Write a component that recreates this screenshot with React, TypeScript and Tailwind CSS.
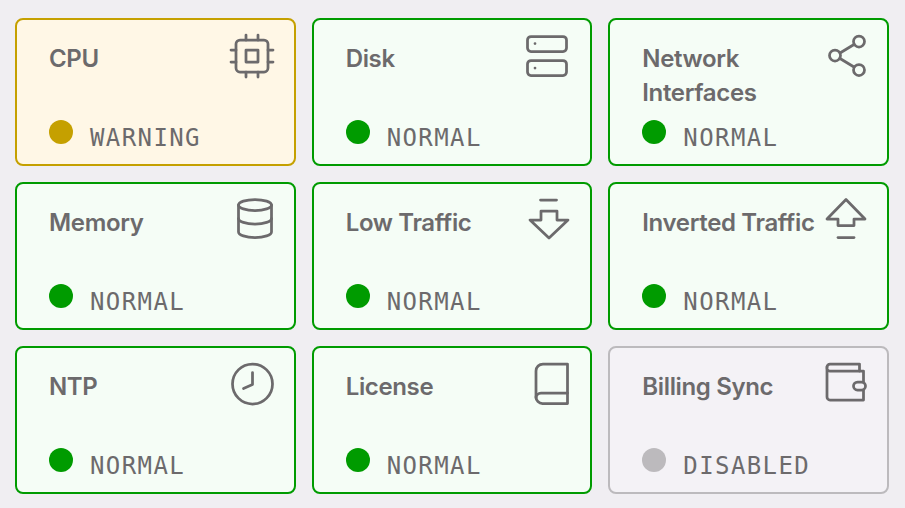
import type { ReactNode } from "react"

type Status = "WARNING" | "NORMAL" | "DISABLED"

const cardStyles: Record<Status, string> = {
  WARNING: "border-[#c5a000] bg-[#fff7e6]",
  NORMAL: "border-[#009b00] bg-[#f5fdf6]",
  DISABLED: "border-[#bcbabd] bg-[#f4f2f6]",
}

const dotStyles: Record<Status, string> = {
  WARNING: "bg-[#c5a000]",
  NORMAL: "bg-[#009b00]",
  DISABLED: "bg-[#bcbabd]",
}

function Icon({ children }: { children: ReactNode }) {
  return (
    <svg
      viewBox="0 0 48 48"
      fill="none"
      strokeWidth="2.75"
      strokeLinecap="round"
      strokeLinejoin="round"
      className="h-12 w-12 shrink-0 stroke-[#6c6a6c]"
    >
      {children}
    </svg>
  )
}

const items: { title: string; status: Status; icon: ReactNode }[] = [
  {
    title: "CPU",
    status: "WARNING",
    icon: (
      <Icon>
        <rect x="7" y="7" width="32" height="32" rx="4" />
        <rect x="17" y="17" width="12" height="12" />
        <path d="M17 2v5M29 2v5M17 39v5M29 39v5M2 17h5M2 29h5M39 17h5M39 29h5" />
      </Icon>
    ),
  },
  {
    title: "Disk",
    status: "NORMAL",
    icon: (
      <Icon>
        <rect x="2.500" y="3.500" width="39" height="15" rx="3.500" />
        <rect x="2.500" y="27.500" width="39" height="15" rx="3.500" />
        <path d="M10 10.500h.01M10 35h.01" />
      </Icon>
    ),
  },
  {
    title: "Network Interfaces",
    status: "NORMAL",
    icon: (
      <Icon>
        <circle cx="37" cy="8.500" r="5.500" />
        <circle cx="13" cy="22.500" r="5.500" />
        <circle cx="37" cy="37" r="5.500" />
        <path d="M18 20l14-8.500M18 25.500l14 8.500" />
      </Icon>
    ),
  },
  {
    title: "Memory",
    status: "NORMAL",
    icon: (
      <Icon>
        <ellipse cx="26" cy="8" rx="16.500" ry="5.500" />
        <path d="M9.500 8v27c0 3 7.400 5.500 16.500 5.500s16.500-2.500 16.500-5.500V8" />
        <path d="M9.500 21.500c0 3 7.400 5.500 16.500 5.500s16.500-2.500 16.500-5.500" />
      </Icon>
    ),
  },
  {
    title: "Low Traffic",
    status: "NORMAL",
    icon: (
      <Icon>
        <path d="M15.500 3h16" />
        <path d="M16 23v-9h16v9h11L24 41 5 23z" />
      </Icon>
    ),
  },
  {
    title: "Inverted Traffic",
    status: "NORMAL",
    icon: (
      <Icon>
        <path d="M16 40.500h16" />
        <path d="M16 22v6.500h16V22h11L24 2.500 5 22z" />
      </Icon>
    ),
  },
  {
    title: "NTP",
    status: "NORMAL",
    icon: (
      <Icon>
        <circle cx="23.500" cy="23" r="20" />
        <path d="M23.500 11.500v12l-9 4" />
      </Icon>
    ),
  },
  {
    title: "License",
    status: "NORMAL",
    icon: (
      <Icon>
        <path d="M42.500 3H18a7 7 0 0 0-7 7v26a6.500 6.500 0 0 0 6.500 6.500h25z" />
        <path d="M11 37a5 5 0 0 1 5-5h26.500" />
      </Icon>
    ),
  },
  {
    title: "Billing Sync",
    status: "DISABLED",
    icon: (
      <Icon>
        <path d="M5 6a3 3 0 0 1 3-3h29.500v7" />
        <path d="M5 6v30a3 3 0 0 0 3 3h33.500V10H8a3 3 0 0 1-3-4z" />
        <rect x="31.500" y="21" width="12" height="8" rx="4" className="fill-[#f4f2f6]" />
      </Icon>
    ),
  },
]

export default function App() {
  return (
    <div className="grid h-[508px] w-[905px] grid-cols-3 grid-rows-[148px_148px_148px] gap-4 bg-[#f0eef2] pl-[15px] pr-4 pt-[18px] font-['Inter',sans-serif]">
      {items.map((item) => (
        <div
          key={item.title}
          className={`flex flex-col justify-between rounded-lg border-2 pb-[12px] pl-8 pr-[17px] pt-[13px] ${cardStyles[item.status]}`}
        >
          <div className="flex items-start justify-between">
            <h3 className="pt-[9px] text-[24px] font-semibold leading-[34px] tracking-[-0.35px] text-[#6c6a6c]">
              {item.title}
            </h3>
            {item.icon}
          </div>
          <div className="flex items-start">
            <span className={`h-6 w-6 rounded-full ${dotStyles[item.status]}`} />
            <span className="ml-[17px] mt-1 font-['DejaVu_Sans_Mono',monospace] text-[24px] leading-[28px] tracking-[1.400px] text-[#6c6a6c]">
              {item.status}
            </span>
          </div>
        </div>
      ))}
    </div>
  )
}
